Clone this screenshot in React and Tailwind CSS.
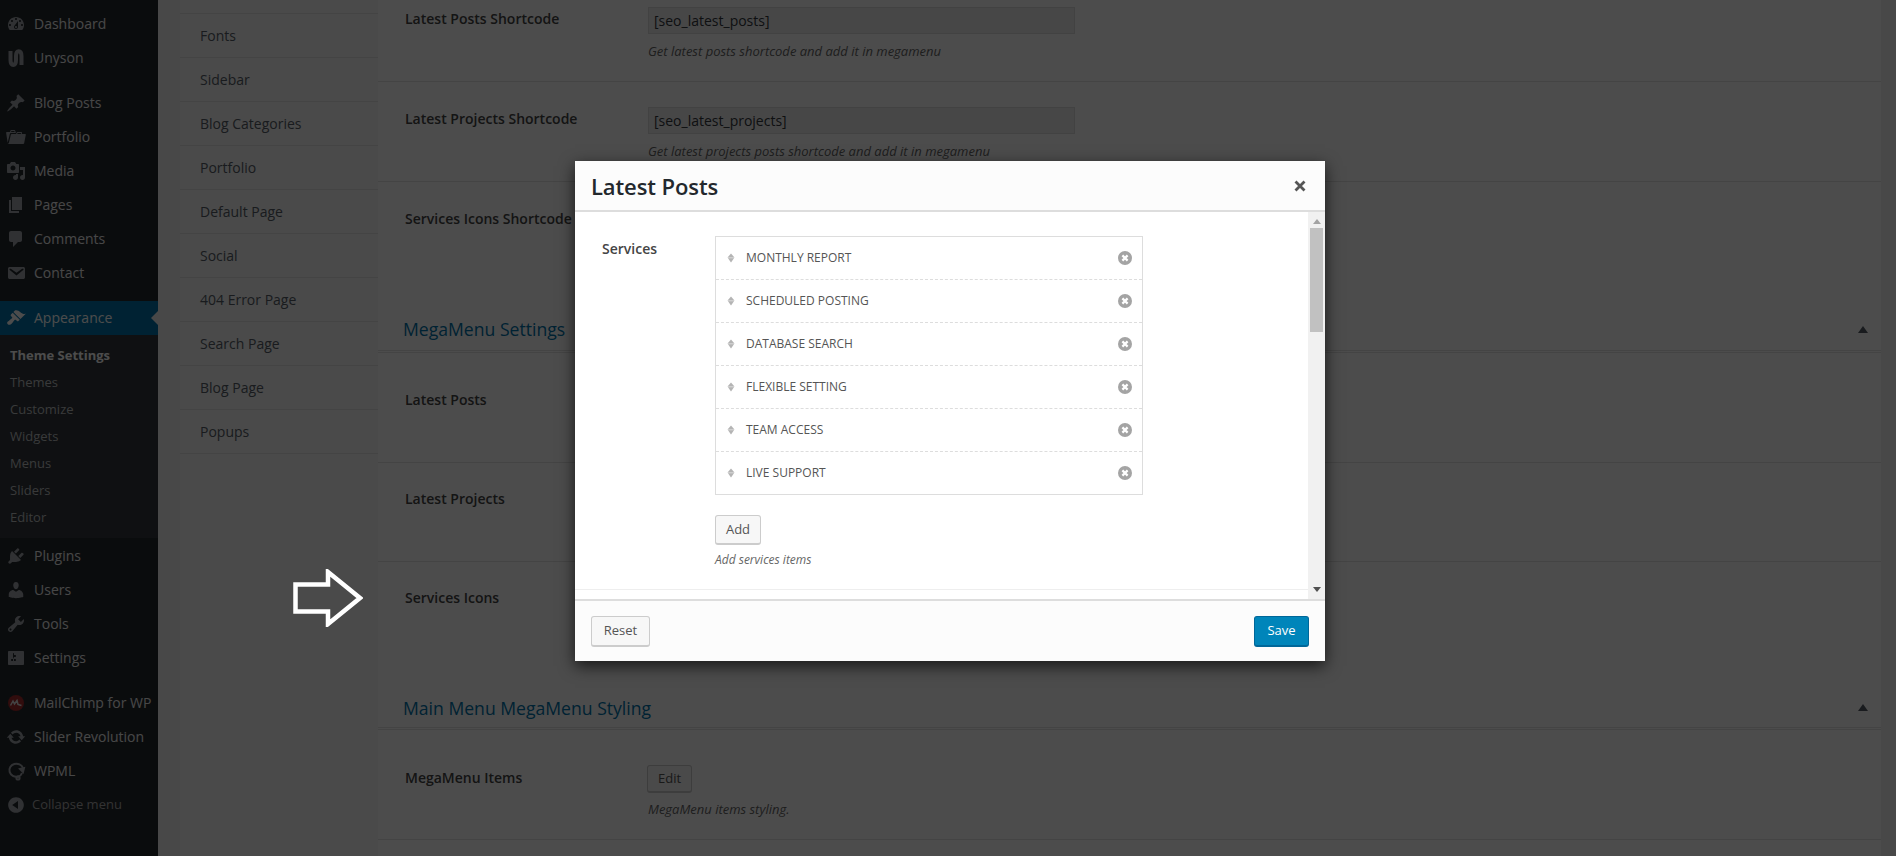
import React from 'react';

// admin menu glyphs, 20x20 grid
const paths = {
  dashboard: 'M3.76 16h12.48c1.1-1.37 1.76-3.11 1.76-5 0-4.42-3.58-8-8-8s-8 3.58-8 8c0 1.89.66 3.63 1.76 5zM10 4c.55 0 1 .45 1 1s-.45 1-1 1-1-.45-1-1 .45-1 1-1zM6 6c.55 0 1 .45 1 1s-.45 1-1 1-1-.45-1-1 .45-1 1-1zm8 0c.55 0 1 .45 1 1s-.45 1-1 1-1-.45-1-1 .45-1 1-1zm-5.37 5.55L12 7v6c0 1.1-.9 2-2 2s-2-.9-2-2c0-.57.24-1.08.63-1.45zM4 10c.55 0 1 .45 1 1s-.45 1-1 1-1-.45-1-1 .45-1 1-1zm12 0c.55 0 1 .45 1 1s-.45 1-1 1-1-.45-1-1 .45-1 1-1zm-5 3c0-.55-.45-1-1-1s-1 .45-1 1 .45 1 1 1 1-.45 1-1z',
  pin: 'M10.44 3.02l1.82-1.82 6.36 6.35-1.83 1.82c-1.05-.68-2.48-.57-3.41.36l-.75.75c-.92.93-1.04 2.35-.35 3.41l-1.83 1.82-2.41-2.41-2.8 2.79c-.42.42-3.38 2.71-3.8 2.29s1.86-3.39 2.28-3.81l2.79-2.79L4.1 9.36l1.83-1.82c1.05.69 2.48.57 3.4-.36l.75-.75c.93-.92 1.05-2.35.36-3.41z',
  portfolio: 'M4 5H.78c-.37 0-.74.32-.69.84l1.56 9.99S3.5 8.47 3.86 6.7c.11-.53.61-.7.98-.7H10s-.7-2.08-.77-2.31C9.11 3.25 8.89 3 8.45 3H5.14c-.36 0-.7.23-.8.64C4.25 4.04 4 5 4 5zm4.88 0h-4s.42-1 .87-1h2.13c.48 0 1 1 1 1zM2.67 16.25c-.31.47-.76.75-1.26.75h15.73c.54 0 .92-.31 1.03-.83.44-2.19 1.68-8.44 1.68-8.44.07-.5-.3-.73-.62-.73H16V5.53c0-.16-.26-.53-.66-.53h-3.76c-.52 0-.87.58-.87.58L10 7H5.59c-.32 0-.63.19-.69.5 0 0-1.59 6.7-1.72 7.33-.07.37-.22.99-.51 1.42zM15.38 7H11s.58-1 1.13-1h2.29c.71 0 .96 1 .96 1z',
  media: 'M13 11V4c0-.55-.45-1-1-1h-1.67L9 1H5L3.67 3H2c-.55 0-1 .45-1 1v7c0 .55.45 1 1 1h10c.55 0 1-.45 1-1zM7 4.5c1.38 0 2.5 1.12 2.5 2.5S8.38 9.5 7 9.5 4.5 8.38 4.5 7 5.62 4.5 7 4.5zM14 6h5v10.5c0 1.38-1.12 2.5-2.5 2.5S14 17.88 14 16.5s1.12-2.5 2.5-2.5c.17 0 .34.02.5.05V9h-3V6zm-4 8.05V13h2v3.5c0 1.38-1.12 2.5-2.5 2.5S7 17.88 7 16.5 8.12 14 9.5 14c.17 0 .34.02.5.05z',
  page: 'M6 15V2h10v13H6zm-1 1h8v2H3V5h2v11z',
  comments: 'M5 2h9c1.1 0 2 .9 2 2v7c0 1.1-.9 2-2 2h-2l-5 5v-5H5c-1.1 0-2-.9-2-2V4c0-1.1.9-2 2-2z',
  email: 'M3.87 4h13.25C18.37 4 19 4.59 19 5.79v8.42c0 1.19-.63 1.79-1.88 1.79H3.87c-1.25 0-1.88-.6-1.88-1.79V5.79c0-1.2.63-1.79 1.88-1.79zm6.62 8.6l6.74-5.53c.24-.2.43-.66.13-1.07-.29-.41-.82-.42-1.17-.17l-5.7 3.86L4.8 5.83c-.35-.25-.88-.24-1.17.17-.3.41-.11.87.13 1.07z',
  brush: 'M14.48 11.06L7.41 3.99l1.5-1.5c.5-.56 2.3-.47 3.51.32 1.21.8 1.43 1.28 2.91 2.1 1.18.64 2.45 1.26 4.45.85zm-.71.71L6.7 4.7 4.93 6.47c-.39.39-.39 1.02 0 1.41l1.06 1.06c.39.39.39 1.03 0 1.42-.6.6-1.43 1.11-2.21 1.69-.35.26-.7.53-1.01.84C1.43 13.23.4 14.8 1.76 16.16c1.36 1.36 2.92.33 4.27-1.02.31-.31.58-.66.84-1.01.58-.78 1.09-1.61 1.69-2.21.39-.39 1.03-.39 1.42 0l1.06 1.06c.39.39 1.02.39 1.41 0z',
  plugins: 'M13.11 4.36L9.87 7.6 8 5.73l3.24-3.24c.35-.34 1.05-.2 1.56.32.52.51.66 1.21.31 1.55zm-8 1.77l.91-1.12 9.01 9.01-1.19.84c-.71.71-2.63 1.16-3.82 1.16H6.14L4.9 17.26c-.59.59-1.54.59-2.12 0-.59-.58-.59-1.53 0-2.12l1.24-1.24v-3.88c0-1.13.4-3.19 1.09-3.89zm7.26 3.97l3.24-3.24c.34-.35 1.04-.21 1.55.31.52.51.66 1.21.31 1.55l-3.24 3.25z',
  users: 'M10 9.25c-2.27 0-2.73-3.44-2.73-3.44C7 4.02 7.82 2 9.97 2c2.16 0 2.98 2.02 2.71 3.81 0 0-.41 3.44-2.68 3.44zm0 2.57L12.72 10c2.39 0 4.52 2.33 4.52 4.53v2.49s-3.65 1.13-7.24 1.13c-3.65 0-7.24-1.13-7.24-1.13v-2.49c0-2.25 1.94-4.48 4.47-4.48z',
  tools: 'M16.68 9.77c-1.34 1.34-3.3 1.67-4.95.99l-5.41 6.52c-.99.99-2.59.99-3.58 0s-.99-2.59 0-3.57l6.52-5.42c-.68-1.65-.35-3.61.99-4.95 1.28-1.28 3.12-1.62 4.72-1.06l-2.89 2.89 2.82 2.82 2.86-2.87c.53 1.58.18 3.39-1.08 4.65zM3.81 16.21c.4.39 1.04.39 1.43 0 .4-.4.4-1.04 0-1.43-.39-.4-1.03-.4-1.43 0-.39.39-.39 1.03 0 1.43z',
  settings: 'M18 16V4c0-.55-.45-1-1-1H3c-.55 0-1 .45-1 1v12c0 .55.45 1 1 1h14c.55 0 1-.45 1-1zM8 11h1c.55 0 1 .45 1 1s-.45 1-1 1H8v1.5c0 .28-.22.5-.5.5s-.5-.22-.5-.5V13H6c-.55 0-1-.45-1-1s.45-1 1-1h1V5.5c0-.28.22-.5.5-.5s.5.22.5.5V7h1c.55 0 1 .45 1 1s-.45 1-1 1h-1v5.5c0 .28-.22.5-.5.5s-.5-.22-.5-.5V9z',
  update: 'M10.2 3.28c3.53 0 6.43 2.61 6.92 6h2.08l-3.5 4-3.5-4h2.32c-.45-1.97-2.21-3.45-4.32-3.45-1.45 0-2.73.71-3.54 1.78L4.95 5.66C6.23 4.2 8.11 3.28 10.2 3.28zm-.4 13.44c-3.52 0-6.43-2.61-6.92-6H.8l3.5-4c1.17 1.33 2.33 2.67 3.5 4H5.48c.45 1.97 2.21 3.45 4.32 3.45 1.45 0 2.73-.71 3.54-1.78l1.71 1.95c-1.28 1.46-3.15 2.38-5.25 2.38z',
  collapse: 'M10 2.16c4.33 0 7.84 3.51 7.84 7.84s-3.51 7.84-7.84 7.84S2.16 14.33 2.16 10 5.71 2.16 10 2.16zm2 11.72V6.12L6.18 9.97z',
};

const Glyph = ({ name }) => (
  <svg viewBox="0 0 20 20" className="w-[20px] h-[20px]" fill="currentColor"><path fillRule="evenodd" d={paths[name]} /></svg>
);

const UnysonIcon = () => (
  <svg viewBox="0 0 20 20" className="w-[20px] h-[20px]" fill="none" stroke="currentColor" strokeWidth="4">
    <path d="M4.5 3v9c0 6.5 5.5 6.5 5.5 0V8c0-6.5 5.5-6.5 5.5 0v9" />
  </svg>
);

const MailchimpIcon = () => (
  <svg viewBox="0 0 20 20" className="w-[20px] h-[20px]">
    <circle cx="10" cy="10" r="8" fill="#a32c2c" />
    <path d="M4.5 12.5 7 8l1.5 3L11 7.5l1 4 3.5 1" stroke="#e2e2e2" strokeWidth="1.5" fill="none" />
  </svg>
);

const WpmlIcon = () => (
  <svg viewBox="0 0 20 20" className="w-[20px] h-[20px]" fill="none" stroke="currentColor" strokeWidth="2">
    <path d="M17 7a7 6.5 0 10-5 8.5c1 0 3-1 4-3.5" />
    <circle cx="12" cy="17" r="1.6" />
    <path d="M14 8l4-1-1 4z" fill="currentColor" />
  </svg>
);

const topMenu = [
  [
    { icon: <Glyph name="dashboard" />, label: 'Dashboard' },
    { icon: <UnysonIcon />, label: 'Unyson' },
  ],
  [
    { icon: <Glyph name="pin" />, label: 'Blog Posts' },
    { icon: <Glyph name="portfolio" />, label: 'Portfolio' },
    { icon: <Glyph name="media" />, label: 'Media' },
    { icon: <Glyph name="page" />, label: 'Pages' },
    { icon: <Glyph name="comments" />, label: 'Comments' },
    { icon: <Glyph name="email" />, label: 'Contact' },
  ],
];

const bottomMenu = [
  [
    { icon: <Glyph name="plugins" />, label: 'Plugins' },
    { icon: <Glyph name="users" />, label: 'Users' },
    { icon: <Glyph name="tools" />, label: 'Tools' },
    { icon: <Glyph name="settings" />, label: 'Settings' },
  ],
  [
    { icon: <MailchimpIcon />, label: 'MailChimp for WP' },
    { icon: <Glyph name="update" />, label: 'Slider Revolution' },
    { icon: <WpmlIcon />, label: 'WPML' },
  ],
];

const subMenu = ['Themes', 'Customize', 'Widgets', 'Menus', 'Sliders', 'Editor'];
const tabs = ['Fonts', 'Sidebar', 'Blog Categories', 'Portfolio', 'Default Page', 'Social', '404 Error Page', 'Search Page', 'Blog Page', 'Popups'];
const services = ['MONTHLY REPORT', 'SCHEDULED POSTING', 'DATABASE SEARCH', 'FLEXIBLE SETTING', 'TEAM ACCESS', 'LIVE SUPPORT'];

function MenuItem({ icon, label }) {
  return (
    <div className="h-[34px] flex items-center text-[14px] text-[#eeeeee] whitespace-nowrap">
      <span className="w-[34px] pl-[6px] shrink-0 text-[#a0a5aa]">{icon}</span>
      <span className="-mt-[2px]">{label}</span>
    </div>
  );
}

function MenuGroup({ items, last }) {
  return (
    <div className={last ? '' : 'mb-[11px]'}>
      {items.map((item) => <MenuItem key={item.label} {...item} />)}
    </div>
  );
}

function Sidebar() {
  return (
    <aside className="w-[158px] shrink-0 bg-[#23282d] pt-[7px]">
      {topMenu.map((group, i) => <MenuGroup key={i} items={group} />)}
      <div className="relative h-[34px] flex items-center bg-[#0073aa] text-[14px] text-white">
        <span className="w-[34px] pl-[6px] shrink-0"><Glyph name="brush" /></span>
        <span className="-mt-[2px]">Appearance</span>
        <span className="absolute right-0 top-[10px] border-y-[7px] border-r-[7px] border-y-transparent border-r-[#f1f1f1]" />
      </div>
      <div className="bg-[#32373c] py-[7px] mb-px text-[13px] text-[#bfc1c3] pl-[10px]">
        <div className="h-[27px] flex items-center font-bold text-white">Theme Settings</div>
        {subMenu.map((s) => <div key={s} className="h-[27px] flex items-center">{s}</div>)}
      </div>
      {bottomMenu.map((group, i) => <MenuGroup key={i} items={group} last={i === bottomMenu.length - 1} />)}
      <div className="h-[34px] flex items-center text-[13px] text-[#aaaaaa]">
        <span className="w-[32px] pl-[6px] shrink-0 text-[#a0a5aa]"><Glyph name="collapse" /></span>
        <span>Collapse menu</span>
      </div>
    </aside>
  );
}

function Tabs() {
  return (
    <nav className="w-[198px] shrink-0 bg-[#f7f7f7] text-[14px] text-[#555d66]">
      <div className="h-[14px] border-b border-[#e5e5e5]" />
      {tabs.map((t) => (
        <div key={t} className="h-[44px] pl-[20px] flex items-center border-b border-[#e5e5e5] pb-px">{t}</div>
      ))}
    </nav>
  );
}

const labelText = 'text-[14px] leading-[20px] font-semibold text-[#444444]';

function ShortcodeRow({ label, value, hint, className }) {
  return (
    <div className={`flex border-b border-[#e5e5e5] pl-[27px] ${className}`}>
      <div className={`w-[243px] pt-[2px] ${labelText}`}>{label}</div>
      <div className="w-[427px]">
        <div className="h-[27px] px-[5px] bg-[#eeeeee] border border-[#dddddd] text-[14px] leading-[25px] text-[#32373c]">{value}</div>
        <p className="mt-[8px] text-[13px] leading-[18px] italic text-[#666666]">{hint}</p>
      </div>
    </div>
  );
}

function SectionHeading({ children, className, arrowClass }) {
  return (
    <div className={`pl-[25px] text-[17.6px] leading-[24px] text-[#0073aa] border-b-[3px] border-double border-[#e5e5e5] flex items-end relative ${className}`}>
      {children}
      <span className={`absolute right-[13px] border-x-[5px] border-b-[7px] border-x-transparent border-b-[#555d66] ${arrowClass}`} />
    </div>
  );
}

function Content() {
  return (
    <main className="w-[1503px] shrink-0 bg-white">
      <ShortcodeRow className="h-[82px] pt-[7px]" label="Latest Posts Shortcode" value="[seo_latest_posts]" hint="Get latest posts shortcode and add it in megamenu" />
      <ShortcodeRow className="h-[100px] pt-[25px]" label="Latest Projects Shortcode" value="[seo_latest_projects]" hint="Get latest projects posts shortcode and add it in megamenu" />
      <div className={`h-[127px] pl-[27px] pt-[27px] ${labelText}`}>Services Icons Shortcode</div>
      <SectionHeading className="h-[44px] pb-[9px]" arrowClass="top-[17px]">MegaMenu Settings</SectionHeading>
      <div className={`pt-[37px] pl-[27px] h-[110px] border-b border-[#e5e5e5] ${labelText}`}>Latest Posts</div>
      <div className={`pt-[26px] pl-[27px] h-[99px] border-b border-[#e5e5e5] ${labelText}`}>Latest Projects</div>
      <div className={`pt-[26px] pl-[27px] h-[112px] ${labelText}`}>Services Icons</div>
      <SectionHeading className="h-[56px] pb-[7px]" arrowClass="top-[30px]">Main Menu MegaMenu Styling</SectionHeading>
      <div className="flex pl-[27px] pt-[35px] h-[110px] border-b border-[#e5e5e5]">
        <div className={`w-[243px] pt-[3px] ${labelText}`}>MegaMenu Items</div>
        <div>
          <div className="w-[45px] h-[28px] -ml-[1px] flex items-center justify-center rounded-[3px] border border-[#cccccc] border-b-2 bg-[#f7f7f7] text-[13px] text-[#555555]">Edit</div>
          <p className="mt-[7px] text-[13px] leading-[18px] italic text-[#666666]">MegaMenu items styling.</p>
        </div>
      </div>
    </main>
  );
}

const RemoveIcon = () => (
  <svg viewBox="0 0 14 14" className="w-[14px] h-[14px]">
    <circle cx="7" cy="7" r="7" fill="#a4a4a4" />
    <path d="M4.4 4.4l5.2 5.2M9.6 4.4l-5.2 5.2" stroke="#fff" strokeWidth="2.2" />
  </svg>
);

const HandleIcon = () => (
  <svg viewBox="0 0 8 10" className="w-[8px] h-[10px] -ml-[1px] mr-[1px]" fill="#b4b4b4">
    <path d="M4 .5l3.5 4-3.5 5-3.5-5z" />
    <path d="M0 4.8h8" stroke="#fff" strokeWidth=".5" />
  </svg>
);

function ServiceRow({ name }) {
  return (
    <div className="h-[43px] last:h-[42px] flex items-center border-b border-dashed border-[#dddddd] last:border-b-0 pl-[12px] pr-[10px] text-[12px] text-[#555555]">
      <HandleIcon />
      <span className="ml-[10px] flex-1">{name}</span>
      <RemoveIcon />
    </div>
  );
}

function Scrollbar() {
  return (
    <div className="w-[17px] shrink-0 bg-[#f1f1f1] flex flex-col items-center">
      <span className="mt-[7px] mb-[4px] border-x-[4px] border-b-[5px] border-x-transparent border-b-[#a3a3a3]" />
      <div className="w-[13px] h-[104px] bg-[#c1c1c1]" />
      <span className="mt-auto mb-[7px] border-x-[4px] border-t-[5px] border-x-transparent border-t-[#505050]" />
    </div>
  );
}

function Modal() {
  return (
    <div className="absolute left-[575px] top-[161px] w-[750px] h-[500px] flex flex-col bg-white shadow-[0_5px_15px_rgba(0,0,0,0.7)]">
      <header className="h-[51px] shrink-0 pl-[16px] pr-[19px] flex items-center justify-between bg-[#fcfcfc] border-b-2 border-[#dddddd]">
        <h1 className="pt-[2px] text-[22px] font-semibold text-[#23282d] tracking-[-0.1px]">Latest Posts</h1>
        <svg viewBox="0 0 12 12" className="w-[12px] h-[12px]">
          <path d="M1.5 1.5l9 9M10.5 1.5l-9 9" stroke="#555555" strokeWidth="2.8" />
        </svg>
      </header>
      <div className="flex-1 min-h-0 flex">
        <div className="flex-1">
          <div className="flex h-[378px] border-b border-[#eeeeee] pl-[27px] pt-[24px]">
            <div className="w-[113px] text-[14px] leading-[26px] font-semibold text-[#444444]">Services</div>
            <div className="w-[428px]">
              <div className="border border-[#dddddd]">
                {services.map((s) => <ServiceRow key={s} name={s} />)}
              </div>
              <div className="mt-[20px] w-[46px] h-[30px] flex items-center justify-center rounded-[3px] border border-[#cccccc] border-b-2 bg-[#f7f7f7] text-[13px] text-[#555555]">Add</div>
              <p className="mt-[6px] text-[12px] leading-[18px] italic text-[#666666]">Add services items</p>
            </div>
          </div>
        </div>
        <Scrollbar />
      </div>
      <footer className="h-[62px] shrink-0 flex items-center justify-between px-[16px] bg-[#fcfcfc] border-t-2 border-[#dddddd]">
        <div className="w-[59px] h-[31px] flex items-center justify-center rounded-[3px] border border-[#cccccc] border-b-2 bg-[#f7f7f7] text-[13px] text-[#555555]">Reset</div>
        <div className="w-[55px] h-[31px] flex items-center justify-center rounded-[3px] border border-[#006799] border-b-2 bg-[#0085ba] text-[13px] text-white">Save</div>
      </footer>
    </div>
  );
}

export default function App() {
  return (
    <div className="relative h-[856px] w-[1896px] overflow-hidden flex bg-[#f1f1f1] font-['Open_Sans',sans-serif]">
      <Sidebar />
      <div className="w-[22px] shrink-0" />
      <Tabs />
      <Content />
      <div className="absolute inset-0 bg-black/70" />
      <svg viewBox="0 0 70 58" className="absolute left-[293px] top-[569px] w-[70px] h-[58px]" fill="none" stroke="#fff" strokeWidth="4.5">
        <path d="M2.5 15.5H35V3l32 26-32 26V42.5H2.5z" />
      </svg>
      <Modal />
    </div>
  );
}
